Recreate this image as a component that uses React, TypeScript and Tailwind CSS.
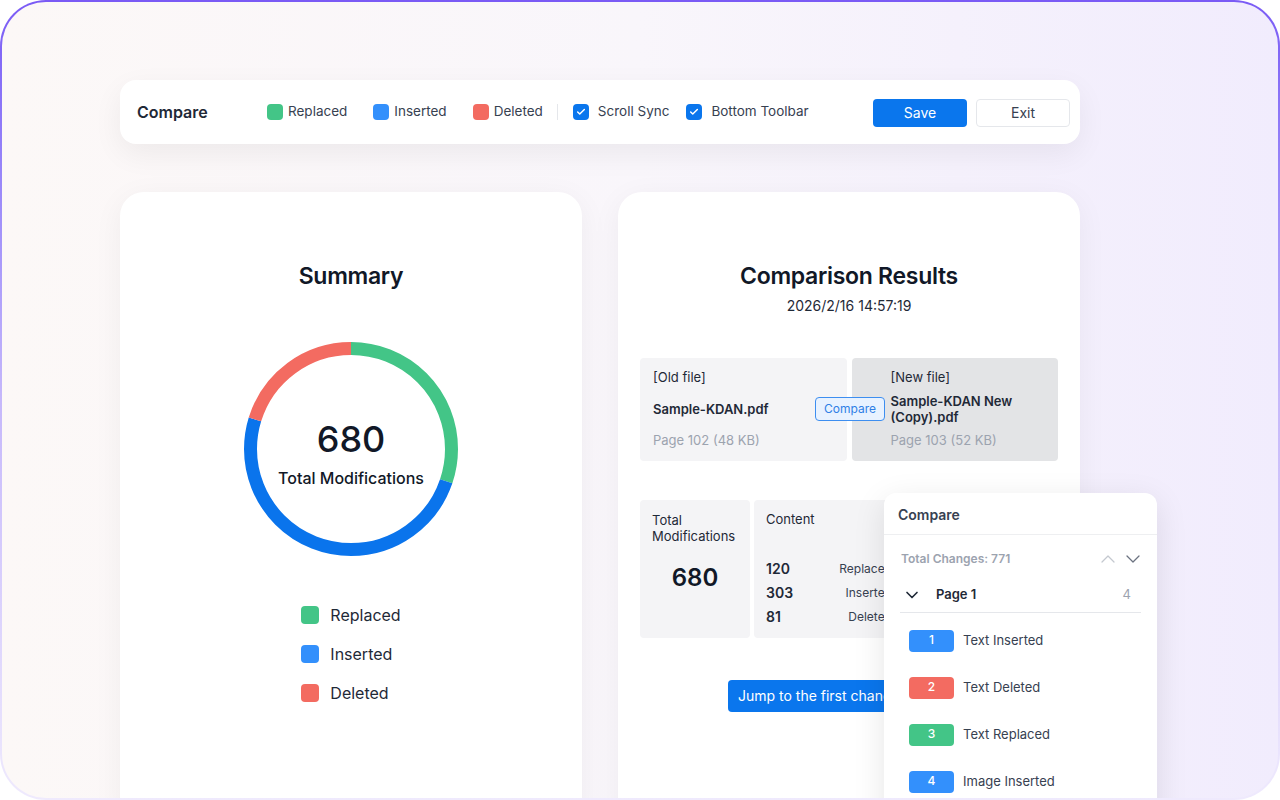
import { Check, ChevronDown, ChevronUp } from 'lucide-react';

const legend = [
  { label: 'Replaced', color: 'bg-[#43c587]' },
  { label: 'Inserted', color: 'bg-[#3390fc]' },
  { label: 'Deleted', color: 'bg-[#f36b61]' },
];

const stats = [
  { value: '120', label: 'Replaced' },
  { value: '303', label: 'Inserted' },
  { value: '81', label: 'Deleted' },
];

const changes = [
  { n: 1, label: 'Text Inserted', color: 'bg-[#3390fc]' },
  { n: 2, label: 'Text Deleted', color: 'bg-[#f36b61]' },
  { n: 3, label: 'Text Replaced', color: 'bg-[#43c587]' },
  { n: 4, label: 'Image Inserted', color: 'bg-[#3390fc]' },
];

const Checkbox = ({ label }: { label: string }) => (
  <div className="flex items-center gap-[9px]">
    <span className="w-4 h-4 rounded-[4px] bg-[#0a76ed] flex items-center justify-center">
      <Check className="w-2.5 h-2.5 text-white" strokeWidth={3.5} />
    </span>
    <span className="text-[13.5px] text-[#374151]">{label}</span>
  </div>
);

const Donut = () => {
  const r = 100.5;
  const c = 2 * Math.PI * r;
  const segs = [
    { deg: 108.6, color: '#43c587' },
    { deg: 178.1, color: '#0a74ec' },
    { deg: 73.3, color: '#f36b61' },
  ];
  let offset = 0;
  return (
    <div className="relative w-[220px] h-[220px] mx-auto">
      <svg width="220" height="220" viewBox="0 0 220 220" className="-rotate-90">
        {segs.map((s) => {
          const len = (s.deg / 360) * c;
          const el = (
            <circle
              key={s.color}
              cx="110"
              cy="110"
              r={r}
              fill="none"
              stroke={s.color}
              strokeWidth="13"
              strokeDasharray={`${len} ${c - len}`}
              strokeDashoffset={-offset}
            />
          );
          offset += len;
          return el;
        })}
      </svg>
      <div className="absolute inset-0 flex flex-col items-center justify-center">
        <span className="text-[36px] leading-[44px] font-medium text-[#111827] mt-[8px]">680</span>
        <span className="text-base font-medium text-[#111827] mt-[5px]">Total Modifications</span>
      </div>
    </div>
  );
};

export default function App() {
  return (
    <div className="w-[1280px] h-[800px] rounded-[46px] p-[2px] bg-gradient-to-b from-[#7a5af5] via-[#c6b8fb] to-[#efeafd]" style={{ fontFamily: 'Inter, "Noto Sans", sans-serif' }}>
      <div className="h-full rounded-[44px] overflow-hidden bg-gradient-to-r from-[#fcf8f7] via-[#f9f6fb] to-[#f1ecfd] pl-[118px] pt-[78px]">
        <div className="w-[960px]">
          {/* toolbar */}
          <div className="h-16 rounded-2xl bg-white shadow-[0_10px_30px_rgba(0,0,0,0.06)] flex items-center pl-[17px] pr-[10px]">
            <span className="text-base font-semibold text-[#1f2937] w-[130px]">Compare</span>
            <div className="flex items-center mt-[-1px]">
              {legend.map((l, i) => (
                <div key={l.label} className={`flex items-center gap-[5px] ${i === 0 ? '' : 'ml-[26px]'}`}>
                  <span className={`w-4 h-4 rounded-[4px] ${l.color}`} />
                  <span className="text-[13.5px] text-[#374151]">{l.label}</span>
                </div>
              ))}
              <span className="w-px h-4 bg-[#e5e7eb] ml-[14px] mr-[15px]" />
              <Checkbox label="Scroll Sync" />
              <div className="ml-[17px]">
                <Checkbox label="Bottom Toolbar" />
              </div>
            </div>
            <div className="ml-auto flex items-center gap-[9px] mt-[2px]">
              <button className="w-[94px] h-[28px] rounded-[4px] bg-[#0a76ed] text-sm text-white">Save</button>
              <button className="w-[94px] h-[28px] rounded-[4px] border border-[#e5e7eb] bg-white text-sm text-[#374151]">Exit</button>
            </div>
          </div>

          <div className="flex gap-[36px] mt-12">
            {/* summary */}
            <div className="w-[462px] h-[640px] rounded-3xl bg-white shadow-[0_6px_30px_rgba(0,0,0,0.05)] pt-[68px]">
              <h2 className="text-[23px] leading-8 tracking-[-0.3px] font-semibold text-[#111827] text-center">Summary</h2>
              <div className="mt-[47px]">
                <Donut />
              </div>
              <div className="w-fit mx-auto mt-[44px] flex flex-col gap-[15px]">
                {legend.map((l) => (
                  <div key={l.label} className="flex items-center gap-[11px] h-6">
                    <span className={`w-[18px] h-[18px] rounded-[4px] ${l.color}`} />
                    <span className="text-base text-[#1f2937]">{l.label}</span>
                  </div>
                ))}
              </div>
            </div>

            {/* results */}
            <div className="relative w-[462px] h-[640px] rounded-3xl bg-white shadow-[0_6px_30px_rgba(0,0,0,0.05)] pt-[68px] px-[22px]">
              <h2 className="text-[23px] leading-8 tracking-[-0.3px] font-semibold text-[#111827] text-center">Comparison Results</h2>
              <p className="text-sm text-[#1f2937] text-center mt-1">2026/2/16 14:57:19</p>

              <div className="relative grid grid-cols-2 gap-[5px] mt-[42px]">
                <div className="h-[103px] rounded-[4px] bg-[#f4f4f6] pl-[13px] pt-[10px] text-[13px] leading-[18px]">
                  <div className="text-[#1f2937]">[Old file]</div>
                  <div className="h-8 mt-[7px] flex items-center font-semibold text-[#1f2937]">Sample-KDAN.pdf</div>
                  <div className="mt-[6px] text-[#9ca3af]">Page 102 (48 KB)</div>
                </div>
                <div className="h-[103px] rounded-[4px] bg-[#e3e4e6] pl-[39px] pr-3 pt-[10px] text-[13px] leading-[18px]">
                  <div className="text-[#1f2937]">[New file]</div>
                  <div className="h-8 mt-[7px] flex items-center font-semibold text-[#1f2937] leading-4">Sample-KDAN New (Copy).pdf</div>
                  <div className="mt-[6px] text-[#9ca3af]">Page 103 (52 KB)</div>
                </div>
                <span className="absolute left-[175px] top-[39px] h-6 px-[8px] rounded-[4px] border border-[#3d8ef0] bg-[#e8f2ff] text-xs leading-[22px] text-[#2f7fe6]">
                  Compare
                </span>
              </div>

              <div className="grid grid-cols-[110px_150px_150px] gap-1 mt-[39px]">
                <div className="h-[138px] rounded-[4px] bg-[#f4f4f6] pl-3 pt-3">
                  <div className="text-[13px] leading-4 text-[#1f2937]">Total<br />Modifications</div>
                  <div className="text-2xl font-semibold text-[#111827] mt-[18px] pr-3 text-center">680</div>
                </div>
                <div className="h-[138px] rounded-[4px] bg-[#f4f4f6] px-3 pt-[11px]">
                  <div className="text-[13px] leading-4 text-[#1f2937]">Content</div>
                  <div className="mt-[30px]">
                    {stats.map((s) => (
                      <div key={s.label} className="flex items-center justify-between h-6">
                        <span className="text-sm font-semibold text-[#1f2937]">{s.value}</span>
                        <span className="text-xs text-[#374151]">{s.label}</span>
                      </div>
                    ))}
                  </div>
                </div>
                <div className="h-[138px] rounded-[4px] bg-[#f4f4f6]" />
              </div>

              <button className="mt-[42px] ml-[88px] h-8 px-2.5 rounded-[4px] bg-[#0a76ed] text-sm text-white">
                Jump to the first change
              </button>

              {/* floating compare panel */}
              <div className="absolute left-[266px] top-[301px] w-[273px] h-[400px] rounded-xl bg-white shadow-[0_8px_32px_rgba(0,0,0,0.10)]">
                <div className="h-[42px] px-[14px] flex items-center border-b border-[#eeeff1]">
                  <span className="text-sm font-semibold text-[#374151] mt-[2px]">Compare</span>
                </div>
                <div className="flex items-center justify-between pl-[17px] pr-[12px] mt-[14px] h-5">
                  <span className="text-xs font-semibold text-[#9ca3af]">Total Changes: 771</span>
                  <div className="flex items-center gap-[1px]">
                    <ChevronUp className="w-6 h-6 text-[#c4c8cf]" strokeWidth={1.25} />
                    <ChevronDown className="w-6 h-6 text-[#6b7280]" strokeWidth={1.25} />
                  </div>
                </div>
                <div className="mx-4 mt-[9px] h-[35px] flex items-center border-b border-[#e5e7eb] pr-[10px]">
                  <ChevronDown className="w-5 h-5 text-[#1f2937] ml-[2px]" strokeWidth={2} />
                  <span className="ml-[14px] text-[13px] font-semibold text-[#1f2937]">Page 1</span>
                  <span className="ml-auto text-[13px] text-[#9ca3af]">4</span>
                </div>
                <div className="mt-[4px] flex flex-col">
                  {changes.map((c) => (
                    <div key={c.n} className="h-[47px] flex items-center pl-[25px] gap-[9px]">
                      <span className={`w-[45px] h-[22px] rounded-[4px] ${c.color} text-white text-xs font-medium flex items-center justify-center pb-[2px]`}>
                        {c.n}
                      </span>
                      <span className="text-[13px] text-[#374151]">{c.label}</span>
                    </div>
                  ))}
                </div>
              </div>
            </div>
          </div>
        </div>
      </div>
    </div>
  );
}
